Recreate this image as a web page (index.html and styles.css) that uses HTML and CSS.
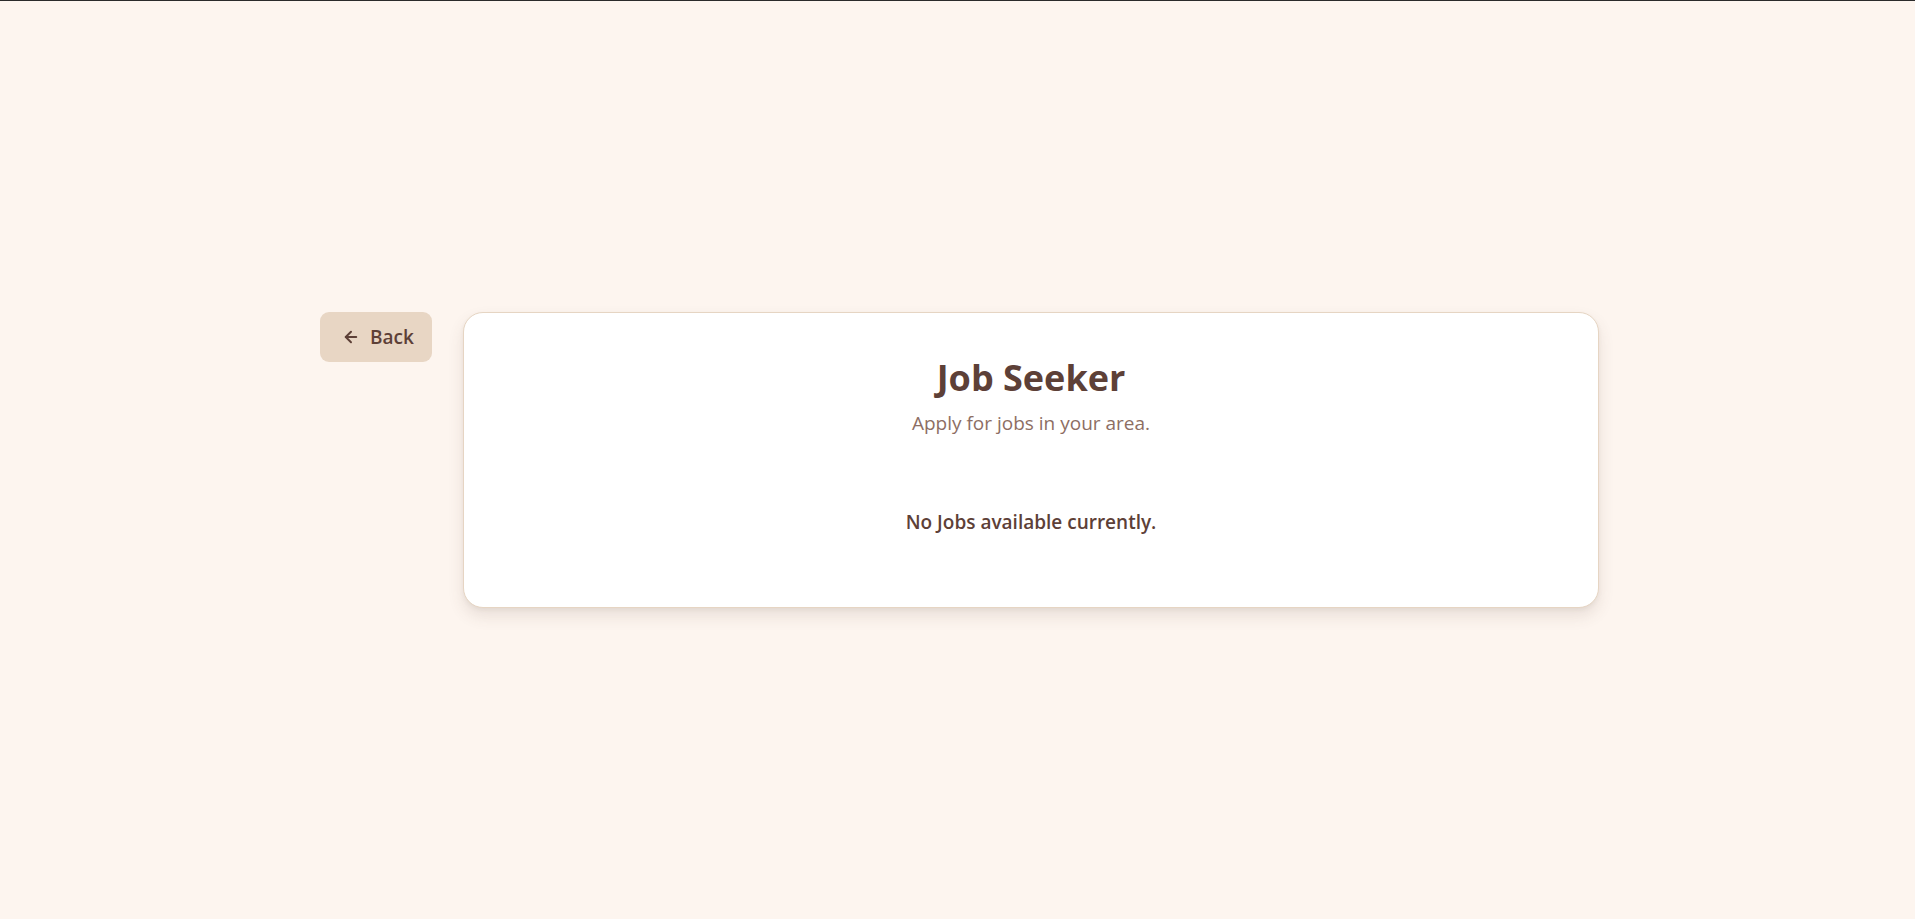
FILE: index.html
```html
<!DOCTYPE html>
<html lang="en">
<head>
<meta charset="utf-8">
<title>Job Seeker</title>
<link rel="stylesheet" href="styles.css">
</head>
<body>
<div class="page">
  <div class="layout">
    <button class="back-btn" type="button">
      <svg class="back-icon" viewBox="0 0 24 24" width="18" height="18" fill="none" stroke="currentColor" stroke-width="2.6" stroke-linecap="round" stroke-linejoin="round"><path d="M12 19l-7-7 7-7"/><path d="M19 12H5"/></svg>
      <span>Back</span>
    </button>
    <main class="card">
      <h1 class="title">Job Seeker</h1>
      <p class="subtitle">Apply for jobs in your area.</p>
      <p class="empty">No Jobs available currently.</p>
    </main>
  </div>
</div>
</body>
</html>
```

FILE: styles.css
```css
* { box-sizing: border-box; }
html, body { margin: 0; padding: 0; }
body {
  background: #fdf5ef;
  font-family: "Open Sans", "Noto Sans", sans-serif;
  color: #5d4037;
  border-top: 1px solid #2b2b2b;
}
.page {
  min-height: 918px;
  display: flex;
  align-items: center;
  justify-content: center;
}
.layout {
  display: flex;
  align-items: flex-start;
  gap: 31px;
  width: 1279px;
  margin-left: 4px;
}
.back-btn {
  flex: none;
  display: flex;
  align-items: center;
  gap: 10px;
  width: 112px;
  height: 50px;
  padding: 0 0 0 22px;
  border: none;
  border-radius: 9px;
  background: #e8d6c4;
  color: #5d4037;
  font-family: inherit;
  font-size: 19px;
  font-weight: 600;
  cursor: pointer;
}
.back-icon { flex: none; }
.card {
  flex: 1;
  height: 296px;
  background: #fff;
  border: 1px solid #e6d5c3;
  border-radius: 20px;
  box-shadow: 0 8px 16px rgba(93, 64, 55, 0.12), 0 2px 4px rgba(93, 64, 55, 0.06);
  display: flex;
  flex-direction: column;
  align-items: center;
  padding-top: 41px;
}
.title {
  margin: 0;
  font-size: 36px;
  font-weight: 700;
  line-height: 48px;
  color: #5d4037;
}
.subtitle {
  margin: 7px 0 0;
  font-size: 19px;
  line-height: 28px;
  color: #8d6e63;
}
.empty {
  margin: 71px 0 0;
  font-size: 19px;
  font-weight: 600;
  line-height: 28px;
  color: #5d4037;
}
```
